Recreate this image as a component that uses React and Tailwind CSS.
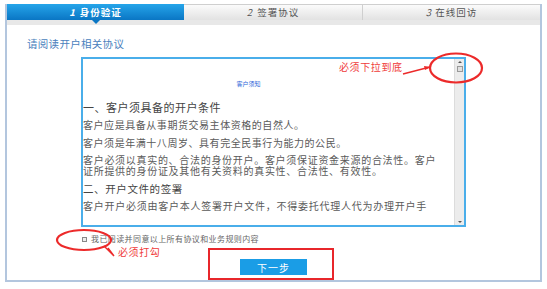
export default function App() {
  const font = { fontFamily: '"Noto Sans CJK SC", "Noto Sans", sans-serif' };
  return (
    <div className="w-[547px] h-[289px] bg-white relative pt-[4px] pl-[5px]" style={font}>
      <div className="w-[537px] h-[278px] border-x-2 border-b-2 border-[#b3c6de] flex flex-col">
        {/* tabs */}
        <div className="flex h-[16px] relative">
          <div className="w-[177px] h-full bg-gradient-to-b from-[#25a5ea] to-[#0a76c4] flex items-center justify-center text-white text-[9.5px] font-bold tracking-[1px] relative">
            <span className="italic mr-[4px]">1</span>身份验证
            <div className="absolute left-[85px] -bottom-[4px] w-0 h-0 border-l-[4px] border-r-[4px] border-t-[4px] border-l-transparent border-r-transparent border-t-[#0a76c4]"></div>
          </div>
          <div className="w-[179px] h-full bg-gradient-to-b from-[#fbfbfb] to-[#e2e2e2] border-r border-t border-[#cfcfcf] flex items-center justify-center text-[#555] text-[9.5px] tracking-[1px]">
            <span className="italic mr-[4px]">2</span>签署协议
          </div>
          <div className="flex-1 h-full bg-gradient-to-b from-[#fbfbfb] to-[#e2e2e2] border-t border-[#cfcfcf] flex items-center justify-center text-[#555] text-[9.5px] tracking-[1px]">
            <span className="italic mr-[3px]">3</span>在线回访
          </div>
        </div>
        <div className="h-[5px] bg-[#e8e8e8]"></div>

        {/* content */}
        <div className="flex flex-col flex-1">
          <div className="mt-[12px] ml-[20px] text-[10.5px] leading-[14px] text-[#4a7fbd] tracking-[0.3px]">请阅读开户相关协议</div>

          <div className="mt-[6px] ml-[74px] w-[385px] h-[170px] border-2 border-[#4aaeea] flex">
            <div className="flex-1 text-[#5a5a5a] overflow-hidden">
              <div className="mt-[21px] text-center text-[6px] leading-[8px] text-[#2a5fd8] pr-[40px]">客户须知</div>
              <div className="mt-[12px] text-[11px] leading-[14px] tracking-[0.5px] text-[#444]">一、客户须具备的开户条件</div>
              <div className="mt-[4px] text-[10px] leading-[14px] tracking-[0.55px]">客户应是具备从事期货交易主体资格的自然人。</div>
              <div className="mt-[4px] text-[10px] leading-[14px] tracking-[0.55px]">客户须是年满十八周岁、具有完全民事行为能力的公民。</div>
              <div className="mt-[4px] text-[10px] leading-[11px] tracking-[0.7px] pr-[10px]">客户必须以真实的、合法的身份开户。客户须保证资金来源的合法性。客户证所提供的身份证及其他有关资料的真实性、合法性、有效性。</div>
              <div className="mt-[6px] text-[10.5px] leading-[14px] tracking-[0.6px] text-[#444]">二、开户文件的签署</div>
              <div className="mt-[3px] text-[10px] leading-[14px] tracking-[0.75px]">客户开户必须由客户本人签署开户文件，不得委托代理人代为办理开户手</div>
            </div>
            <div className="w-[10px] bg-[#ececec] border-l border-[#dcdcdc] flex flex-col items-center justify-between py-[1px]">
              <div className="flex flex-col items-center">
                <div className="w-0 h-0 border-l-[2px] border-r-[2px] border-b-[2px] border-l-transparent border-r-transparent border-b-[#555] mt-[1px]"></div>
                <div className="w-[6px] h-[6px] mt-[3px] bg-[#e0e0e0] border border-[#999]"></div>
              </div>
              <div className="w-0 h-0 border-l-[2px] border-r-[2px] border-t-[2px] border-l-transparent border-r-transparent border-t-[#555] mb-[1px]"></div>
            </div>
          </div>

          <div className="mt-[6px] ml-[75px] flex items-center h-[12px]">
            <div className="w-[5px] h-[5px] border border-[#888] bg-[#eee]"></div>
            <span className="ml-[4px] text-[8px] tracking-[0.4px] text-[#666]">我已阅读并同意以上所有协议和业务规则内容</span>
          </div>

          <div className="mt-[14px] ml-[233px] w-[67px] h-[16px] bg-[#1a9de6] flex items-center justify-center text-white text-[10px] tracking-[1px]">下一步</div>
        </div>
      </div>

      {/* annotations */}
      <div className="absolute left-[339px] top-[60px] text-[10px] leading-[14px] tracking-[0.6px] text-[#ef3b3b]">必须下拉到底</div>
      <div className="absolute left-[118px] top-[245px] text-[10px] leading-[14px] tracking-[0.6px] text-[#ef3b3b]">必须打勾</div>
      <div className="absolute left-[208px] top-[248px] w-[126px] h-[32px] border-[2.5px] border-[#e8262b]"></div>
      <svg className="absolute left-0 top-0" width="547" height="289" viewBox="0 0 547 289" fill="none">
        <ellipse cx="456" cy="68" rx="26" ry="14.5" stroke="#ec2a2a" strokeWidth="2.2" />
        <path d="M403 74 L430 67" stroke="#ec2a2a" strokeWidth="1.4" />
        <path d="M424 66 L431 67 L425 70 Z" fill="#ec2a2a" />
        <ellipse cx="84" cy="240" rx="27" ry="10" stroke="#ec2a2a" strokeWidth="2.2" />
        <path d="M104 246 L114 256 L108 248" stroke="#ec2a2a" strokeWidth="1.4" />
      </svg>
    </div>
  );
}
